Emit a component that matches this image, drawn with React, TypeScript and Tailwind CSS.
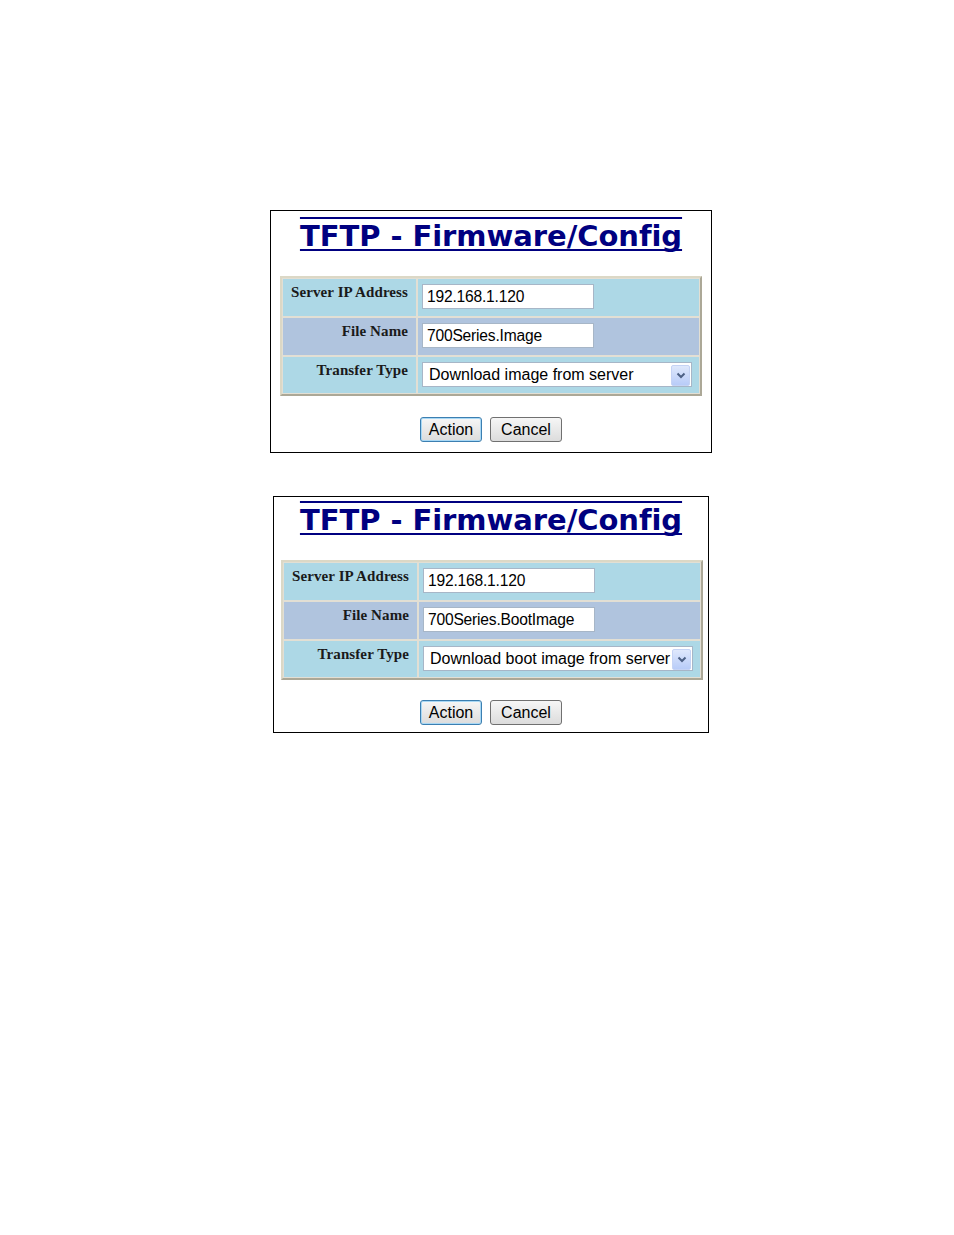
import React from "react";

type PanelProps = {
  ml: number;
  mt: number;
  width: number;
  fileName: string;
  transfer: string;
  second?: boolean;
};

function Chevron() {
  return (
    <svg width="10" height="7" viewBox="0 0 10 7">
      <path d="M1.5 1.5 L5 5 L8.5 1.5" fill="none" stroke="#4d6185" strokeWidth="2" />
    </svg>
  );
}

function Row({ bg, label, children, last }: { bg: string; label: string; children: React.ReactNode; last?: boolean }) {
  return (
    <div className={`flex ${last ? "h-[38px]" : "h-[39px]"}`}>
      <div
        className="w-[135px] border border-[#e2dfd4] pr-[8px] pt-[4px] text-right text-[15px] font-bold leading-[18px] tracking-[0.1px] text-[#1a1a1a]"
        style={{ backgroundColor: bg, fontFamily: '"Liberation Serif", "Times New Roman", serif' }}
      >
        {label}
      </div>
      <div className="flex-1 border border-[#e2dfd4] pl-[4px] pt-[5px]" style={{ backgroundColor: bg }}>
        {children}
      </div>
    </div>
  );
}

function TextBox({ value }: { value: string }) {
  return (
    <div className="flex h-[25px] w-[172px] items-center border border-[#a7b6c7] bg-white pl-[4px] pt-[1px] font-['Liberation_Sans',Arial,sans-serif] text-[15.6px] tracking-[-0.2px] text-black">
      {value}
    </div>
  );
}

function Panel({ ml, mt, width, fileName, transfer, second }: PanelProps) {
  return (
    <div
      className="border border-black bg-white"
      style={{ marginLeft: ml, marginTop: mt, width }}
    >
      <div className={`flex justify-center ${second ? "h-[63px] pt-[5px]" : "h-[65px] pt-[7px]"}`}>
        <span className="font-['DejaVu_Sans',Verdana,sans-serif] text-[29px] font-bold leading-[36px] tracking-[-0.05px] text-[#000080] [text-decoration-line:underline_overline] [text-decoration-skip-ink:none] [text-decoration-thickness:1.5px] underline-offset-[3px]">
          TFTP - Firmware/Config
        </span>
      </div>
      <div className={`${second ? "ml-[7px]" : "ml-[9px]"} w-[422px] border-2 border-t-[#dcd8c6] border-l-[#dcd8c6] border-b-[#aca897] border-r-[#aca897]`}>
        <Row bg="#add8e6" label="Server IP Address">
          <TextBox value="192.168.1.120" />
        </Row>
        <Row bg="#b0c4de" label="File Name">
          <TextBox value={fileName} />
        </Row>
        <Row bg="#add8e6" label="Transfer Type" last>
          <div className="flex h-[25px] w-[270px] items-center border border-[#a7b6c7] bg-white pl-[6px] pr-[1px] pt-[1px] font-['Liberation_Sans',Arial,sans-serif] text-[16px] text-black">
            <span className="flex-1 whitespace-nowrap">{transfer}</span>
            <div className="flex h-[21px] w-[19px] items-center justify-center rounded-[2px] border border-[#c5d3f5] bg-gradient-to-b from-[#dfe8fc] to-[#b8ccf8]">
              <Chevron />
            </div>
          </div>
        </Row>
      </div>
      <div className={`flex justify-center gap-[8px] ${second ? "mt-[20px] mb-[7px]" : "mt-[21px] mb-[10px]"}`}>
        <button className="h-[25px] w-[62px] rounded-[3px] border border-[#3c7fb1] bg-gradient-to-b from-[#f6f6f6] to-[#dcdcdc] font-['Liberation_Sans',Arial,sans-serif] text-[16px] leading-none text-black shadow-[inset_0_0_0_1px_#a8d8f5]">
          Action
        </button>
        <button className="h-[25px] w-[72px] rounded-[3px] border border-[#707070] bg-gradient-to-b from-[#f6f6f6] to-[#dcdcdc] font-['Liberation_Sans',Arial,sans-serif] text-[16px] leading-none text-black">
          Cancel
        </button>
      </div>
    </div>
  );
}

export default function App() {
  return (
    <div className="min-h-[1235px] w-[954px] bg-white pt-[1px]">
      <Panel ml={270} mt={209} width={442} fileName="700Series.Image" transfer="Download image from server" />
      <Panel ml={273} mt={43} width={436} fileName="700Series.BootImage" transfer="Download boot image from server" second />
    </div>
  );
}
